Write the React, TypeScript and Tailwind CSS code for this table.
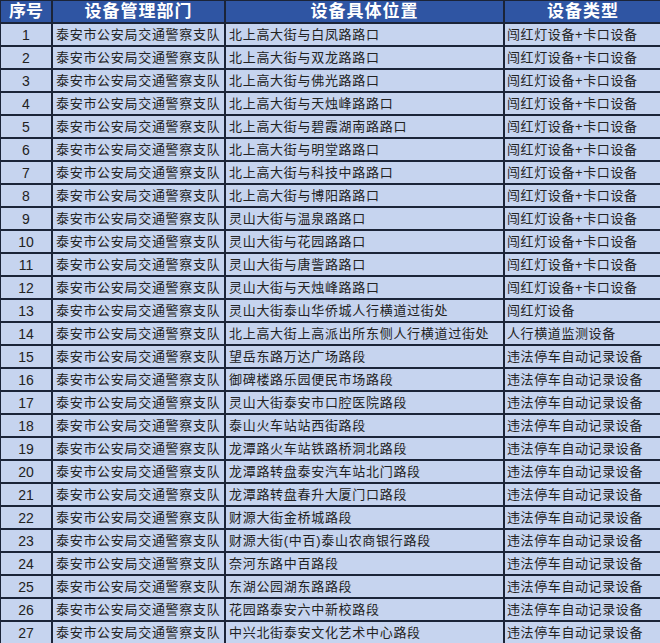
const rows: [string, string][] = [
  ["北上高大街与白凤路路口", "闯红灯设备+卡口设备"],
  ["北上高大街与双龙路路口", "闯红灯设备+卡口设备"],
  ["北上高大街与佛光路路口", "闯红灯设备+卡口设备"],
  ["北上高大街与天烛峰路路口", "闯红灯设备+卡口设备"],
  ["北上高大街与碧霞湖南路路口", "闯红灯设备+卡口设备"],
  ["北上高大街与明堂路路口", "闯红灯设备+卡口设备"],
  ["北上高大街与科技中路路口", "闯红灯设备+卡口设备"],
  ["北上高大街与博阳路路口", "闯红灯设备+卡口设备"],
  ["灵山大街与温泉路路口", "闯红灯设备+卡口设备"],
  ["灵山大街与花园路路口", "闯红灯设备+卡口设备"],
  ["灵山大街与唐訾路路口", "闯红灯设备+卡口设备"],
  ["灵山大街与天烛峰路路口", "闯红灯设备+卡口设备"],
  ["灵山大街泰山华侨城人行横道过街处", "闯红灯设备"],
  ["北上高大街上高派出所东侧人行横道过街处", "人行横道监测设备"],
  ["望岳东路万达广场路段", "违法停车自动记录设备"],
  ["御碑楼路乐园便民市场路段", "违法停车自动记录设备"],
  ["灵山大街泰安市口腔医院路段", "违法停车自动记录设备"],
  ["泰山火车站站西街路段", "违法停车自动记录设备"],
  ["龙潭路火车站铁路桥洞北路段", "违法停车自动记录设备"],
  ["龙潭路转盘泰安汽车站北门路段", "违法停车自动记录设备"],
  ["龙潭路转盘春升大厦门口路段", "违法停车自动记录设备"],
  ["财源大街金桥城路段", "违法停车自动记录设备"],
  ["财源大街(中百)泰山农商银行路段", "违法停车自动记录设备"],
  ["奈河东路中百路段", "违法停车自动记录设备"],
  ["东湖公园湖东路路段", "违法停车自动记录设备"],
  ["花园路泰安六中新校路段", "违法停车自动记录设备"],
  ["中兴北街泰安文化艺术中心路段", "违法停车自动记录设备"],
];

const dept = "泰安市公安局交通警察支队";

export default function App() {
  return (
    <div className="w-[660px] h-[643px] overflow-hidden bg-[#c6d4ef] font-['Liberation_Sans','Noto_Sans_CJK_SC',sans-serif]">
      <table className="table-fixed border-collapse w-[662px] -ml-[1px] -mt-[1px]">
        <colgroup>
          <col className="w-[52px]" />
          <col className="w-[173px]" />
          <col className="w-[279px]" />
          <col className="w-[158px]" />
        </colgroup>
        <thead>
          <tr className="bg-[#2f55a3] text-white text-[17px] font-bold">
            <th className="h-[23px] border-2 border-[#1b2438] p-0 leading-none">序号</th>
            <th className="h-[23px] border-2 border-[#1b2438] p-0 leading-none tracking-[1px]">设备管理部门</th>
            <th className="h-[23px] border-2 border-[#1b2438] p-0 leading-none tracking-[1px]">设备具体位置</th>
            <th className="h-[23px] border-2 border-[#1b2438] p-0 leading-none tracking-[1px]">设备类型</th>
          </tr>
        </thead>
        <tbody className="text-[13px] text-[#222]">
          {rows.map(([loc, type], i) => (
            <tr key={i} className="bg-[#c6d4ef]">
              <td className="h-[23px] border-2 border-[#1b2438] p-0 text-center leading-none text-[14px]">{i + 1}</td>
              <td className="h-[23px] border-2 border-[#1b2438] py-0 pl-[3px] pr-0 leading-none tracking-[0.7px] whitespace-nowrap">{dept}</td>
              <td className="h-[23px] border-2 border-[#1b2438] py-0 pl-[3px] pr-0 leading-none tracking-[0.7px] whitespace-nowrap">{loc}</td>
              <td className="h-[23px] border-2 border-[#1b2438] py-0 pl-[2px] pr-0 leading-none tracking-[0.6px] whitespace-nowrap">{type}</td>
            </tr>
          ))}
        </tbody>
      </table>
    </div>
  );
}
